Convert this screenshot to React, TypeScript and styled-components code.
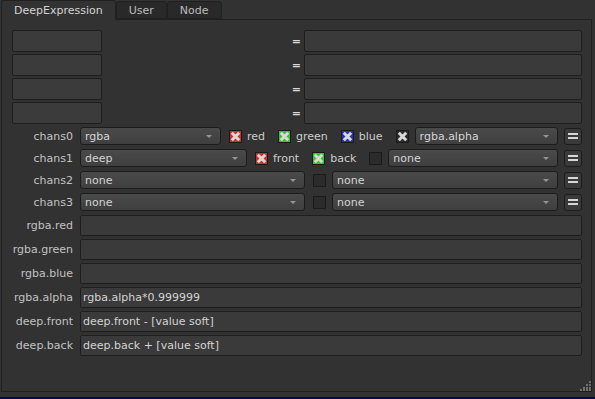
import styled, { createGlobalStyle } from 'styled-components';

const GlobalStyle = createGlobalStyle`
  html, body {
    margin: 0;
    padding: 0;
    background: #323232;
  }
  body {
    font-family: 'DejaVu Sans', 'Liberation Sans', sans-serif;
    font-size: 11px;
    color: #cccccc;
  }
`;

type ChannelColor = 'red' | 'green' | 'blue' | 'plain' | 'off';

const CHECK_COLORS: Record<ChannelColor, string> = {
  red: '#cc2f2f',
  green: '#33c433',
  blue: '#2d2dc4',
  plain: '#2b2b2b',
  off: '#2b2b2b',
};

interface IChannelRow {
  name: string;
  layer: string;
  layerWidth: number;
  checks: { color: ChannelColor; label?: string }[];
  rest: string;
}

const channelRows: IChannelRow[] = [
  {
    name: 'chans0',
    layer: 'rgba',
    layerWidth: 141,
    checks: [
      { color: 'red', label: 'red' },
      { color: 'green', label: 'green' },
      { color: 'blue', label: 'blue' },
      { color: 'plain' },
    ],
    rest: 'rgba.alpha',
  },
  {
    name: 'chans1',
    layer: 'deep',
    layerWidth: 167,
    checks: [
      { color: 'red', label: 'front' },
      { color: 'green', label: 'back' },
      { color: 'off' },
    ],
    rest: 'none',
  },
  {
    name: 'chans2',
    layer: 'none',
    layerWidth: 225,
    checks: [{ color: 'off' }],
    rest: 'none',
  },
  {
    name: 'chans3',
    layer: 'none',
    layerWidth: 225,
    checks: [{ color: 'off' }],
    rest: 'none',
  },
];

const expressions = [
  { name: 'rgba.red', value: '' },
  { name: 'rgba.green', value: '' },
  { name: 'rgba.blue', value: '' },
  { name: 'rgba.alpha', value: 'rgba.alpha*0.999999' },
  { name: 'deep.front', value: 'deep.front - [value soft]' },
  { name: 'deep.back', value: 'deep.back + [value soft]' },
];

const CheckMark = () => (
  <svg width="11" height="11" viewBox="0 0 11 11">
    <path
      d="M1.8 1.8 L9.2 9.2 M9.2 1.8 L1.8 9.2"
      stroke="#d8d8d8"
      strokeWidth="3"
      fill="none"
    />
  </svg>
);

const Dropdown = ({ value, width }: { value: string; width?: number }) => (
  <Select style={width ? { width } : undefined} grow={!width}>
    <span>{value}</span>
    <Arrow />
  </Select>
);

const App = () => {
  return (
    <>
      <GlobalStyle />
      <Window>
        <TabBar>
          <Tab active>DeepExpression</Tab>
          <Tab>User</Tab>
          <Tab>Node</Tab>
        </TabBar>
        <Panel>
          <Section gap={2}>
            {[0, 1, 2, 3].map((i) => (
              <TopRow key={i}>
                <VarBox />
                <EqualSign>=</EqualSign>
                <Field width={278} />
              </TopRow>
            ))}
          </Section>

          <Section gap={4} top={3}>
            {channelRows.map((row) => (
              <ChanRow key={row.name}>
                <Label>{row.name}</Label>
                <Dropdown value={row.layer} width={row.layerWidth} />
                {row.checks.map((check, idx) => (
                  <CheckItem key={idx} hasLabel={!!check.label}>
                    <CheckBox color={CHECK_COLORS[check.color]}>
                      {check.color !== 'off' && <CheckMark />}
                    </CheckBox>
                    {check.label && <CheckLabel>{check.label}</CheckLabel>}
                  </CheckItem>
                ))}
                <Dropdown value={row.rest} />
                <EqualsButton>
                  <EqLine />
                  <EqLine />
                </EqualsButton>
              </ChanRow>
            ))}
          </Section>

          <Section gap={3} top={4}>
            {expressions.map((expr) => (
              <Row key={expr.name}>
                <Label>{expr.name}</Label>
                <ExprField>{expr.value}</ExprField>
              </Row>
            ))}
          </Section>

          <Grip width="11" height="10" viewBox="0 0 11 10">
            {[
              [9, 0],
              [9, 3],
              [6, 3],
              [9, 6],
              [6, 6],
              [3, 6],
              [9, 8],
              [6, 8],
              [3, 8],
              [0, 8],
            ].map(([x, y], i) => (
              <rect key={i} x={x} y={y} width="2" height="2" fill="#6e6e6e" />
            ))}
          </Grip>
        </Panel>
        <Spacer />
        <BottomStrip />
      </Window>
    </>
  );
};

const Window = styled.div`
  position: relative;
  display: flex;
  flex-direction: column;
  width: 595px;
  height: 399px;
  overflow: hidden;
  background: #323232;
`;

const TabBar = styled.div`
  display: flex;
  align-items: flex-end;
  height: 19px;
`;

const Tab = styled.div<{ active?: boolean }>`
  position: relative;
  z-index: ${({ active }) => (active ? 2 : 1)};
  box-sizing: border-box;
  height: ${({ active }) => (active ? '20px' : '18px')};
  margin-bottom: ${({ active }) => (active ? '-1px' : '0')};
  margin-left: ${({ active }) => (active ? '1px' : '0')};
  padding: ${({ active }) => (active ? '2px 12px 0 12px' : '1px 12px 0 12px')};
  line-height: 15px;
  border: 1px solid #202020;
  border-bottom: ${({ active }) => (active ? 'none' : '1px solid #202020')};
  border-radius: 3px 3px 0 0;
  background: ${({ active }) => (active ? '#323232' : '#292929')};
  color: ${({ active }) => (active ? '#d2d2d2' : '#bcbcbc')};
  font-size: 11px;
`;

const Panel = styled.div`
  position: relative;
  box-sizing: border-box;
  width: 591px;
  height: 373px;
  margin-left: 1px;
  padding: 10px 9px 0 10px;
  border: 1px solid #202020;
  display: flex;
  flex-direction: column;
`;

const Section = styled.div<{ gap: number; top?: number }>`
  display: flex;
  flex-direction: column;
  gap: ${({ gap }) => gap}px;
  margin-top: ${({ top }) => top ?? 0}px;
`;

const TopRow = styled.div`
  display: flex;
  align-items: center;
  gap: 3px;
`;

const Row = styled.div`
  display: flex;
  align-items: center;
  gap: 7px;
`;

const ChanRow = styled.div`
  display: flex;
  align-items: center;
  height: 18px;
  gap: 7px;
`;

const Label = styled.div`
  width: 61px;
  flex: none;
  text-align: right;
  color: #c2c2c2;
  white-space: nowrap;
`;

const VarBox = styled.div`
  box-sizing: border-box;
  width: 90px;
  height: 22px;
  border: 1px solid #1e1e1e;
  border-radius: 2px;
  background: #3b3b3b;
`;

const EqualSign = styled.div`
  flex: 1;
  text-align: right;
  color: #dadada;
  font-weight: bold;
`;

const Field = styled.div<{ width: number }>`
  box-sizing: border-box;
  width: ${({ width }) => width}px;
  height: 22px;
  border: 1px solid #1e1e1e;
  border-radius: 2px;
  background: #3a3a3a;
`;

const ExprField = styled.div`
  box-sizing: border-box;
  flex: 1;
  height: 21px;
  padding: 0 2px;
  line-height: 19px;
  border: 1px solid #1e1e1e;
  border-radius: 2px;
  background: #3a3a3a;
  color: #d4d4d4;
  white-space: nowrap;
`;

const Select = styled.div<{ grow?: boolean }>`
  box-sizing: border-box;
  display: flex;
  align-items: center;
  justify-content: space-between;
  flex: ${({ grow }) => (grow ? 1 : 'none')};
  height: 18px;
  padding: 0 8px 0 4px;
  border: 1px solid #1c1c1c;
  border-radius: 3px;
  background: linear-gradient(#4a4a4a, #3f3f3f);
  color: #d4d4d4;
`;

const Arrow = styled.span`
  width: 0;
  height: 0;
  border-left: 3px solid transparent;
  border-right: 3px solid transparent;
  border-top: 3px solid #949494;
`;

const CheckItem = styled.div<{ hasLabel: boolean }>`
  display: flex;
  align-items: center;
  gap: 5px;
  margin-left: 1px;
  margin-right: ${({ hasLabel }) => (hasLabel ? '5px' : '-1px')};
`;

const CheckBox = styled.div<{ color: string }>`
  box-sizing: border-box;
  display: flex;
  align-items: center;
  justify-content: center;
  width: 13px;
  height: 13px;
  border: 1px solid #1a1a1a;
  background: ${({ color }) => color};
`;

const CheckLabel = styled.span`
  color: #cccccc;
  white-space: nowrap;
`;

const EqualsButton = styled.div`
  box-sizing: border-box;
  display: flex;
  flex-direction: column;
  align-items: center;
  justify-content: center;
  gap: 2px;
  width: 18px;
  height: 17px;
  margin-left: -1px;
  border: 1px solid #1c1c1c;
  border-radius: 3px;
  background: #3a3a3a;
`;

const EqLine = styled.span`
  width: 10px;
  height: 2px;
  background: #d6d6d6;
`;

const Grip = styled.svg`
  position: absolute;
  right: 0;
  bottom: 0;
`;

const Spacer = styled.div`
  flex: 1;
`;

const BottomStrip = styled.div`
  height: 2px;
  background: #06065e;
`;

export default App;
